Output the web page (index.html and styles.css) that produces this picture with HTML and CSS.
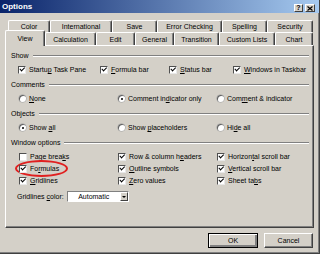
FILE: index.html
```html
<!DOCTYPE html>
<html lang="en">
<head>
    <meta charset="UTF-8">
    <meta name="viewport" content="width=device-width, initial-scale=1.0">
    <title>Options</title>
    <link rel="stylesheet" href="styles.css">
</head>
<body>
    <div class="dialog">
        <div class="titlebar">
            <span class="title">Options</span>
            <span class="tbtn">?</span>
            <span class="tbtn close">
                <svg width="6" height="5" viewBox="0 0 6 5"><path d="M0.5 0.5 L5.5 4.5 M5.5 0.5 L0.5 4.5" stroke="#000" stroke-width="1.2"/></svg>
            </span>
        </div>

        <div class="tabs">
            <div class="tabrow back">
                <div class="tab">Color</div>
                <div class="tab">International</div>
                <div class="tab">Save</div>
                <div class="tab">Error Checking</div>
                <div class="tab">Spelling</div>
                <div class="tab">Security</div>
            </div>
            <div class="tabrow front">
                <div class="tab active">View</div>
                <div class="tab">Calculation</div>
                <div class="tab">Edit</div>
                <div class="tab">General</div>
                <div class="tab">Transition</div>
                <div class="tab">Custom Lists</div>
                <div class="tab">Chart</div>
            </div>
        </div>

        <div class="panel">
            <div class="group">
                <div class="heading">Show</div>
                <div class="row show-row">
                    <div class="item"><span class="check on"></span><span>Startu<u>p</u> Task Pane</span></div>
                    <div class="item"><span class="check on"></span><span><u>F</u>ormula bar</span></div>
                    <div class="item"><span class="check on"></span><span><u>S</u>tatus bar</span></div>
                    <div class="item"><span class="check on"></span><span><u>W</u>indows in Taskbar</span></div>
                </div>
            </div>

            <div class="group">
                <div class="heading">Comments</div>
                <div class="row">
                    <div class="item"><span class="radio"></span><span><u>N</u>one</span></div>
                    <div class="item"><span class="radio on"></span><span>Comment in<u>d</u>icator only</span></div>
                    <div class="item"><span class="radio"></span><span>Com<u>m</u>ent &amp; indicator</span></div>
                </div>
            </div>

            <div class="group">
                <div class="heading">Objects</div>
                <div class="row">
                    <div class="item"><span class="radio on"></span><span>Show <u>a</u>ll</span></div>
                    <div class="item"><span class="radio"></span><span>Show <u>p</u>laceholders</span></div>
                    <div class="item"><span class="radio"></span><span>Hi<u>d</u>e all</span></div>
                </div>
            </div>

            <div class="group">
                <div class="heading">Window options</div>
                <div class="options">
                    <div class="row">
                        <div class="item"><span class="check"></span><span>Page brea<u>k</u>s</span></div>
                        <div class="item"><span class="check on"></span><span>Row &amp; column h<u>e</u>aders</span></div>
                        <div class="item"><span class="check on"></span><span>Horizon<u>t</u>al scroll bar</span></div>
                    </div>
                    <div class="row">
                        <div class="item marked"><span class="check on"></span><span>Fo<u>r</u>mulas</span></div>
                        <div class="item"><span class="check on"></span><span><u>O</u>utline symbols</span></div>
                        <div class="item"><span class="check on"></span><span><u>V</u>ertical scroll bar</span></div>
                    </div>
                    <div class="row">
                        <div class="item"><span class="check on"></span><span><u>G</u>ridlines</span></div>
                        <div class="item"><span class="check on"></span><span><u>Z</u>ero values</span></div>
                        <div class="item"><span class="check on"></span><span>Sheet ta<u>b</u>s</span></div>
                    </div>
                </div>
                <div class="color-row">
                    <span>Gridlines <u>c</u>olor:</span>
                    <div class="select">
                        <span class="value">Automatic</span>
                        <span class="drop"></span>
                    </div>
                </div>
            </div>
        </div>

        <div class="actions">
            <button class="btn default">OK</button>
            <button class="btn">Cancel</button>
        </div>
    </div>
</body>
</html>
```

FILE: styles.css
```css
body {
    margin: 0;
    font-family: "Liberation Sans", Arial, sans-serif;
    font-size: 7px;
    color: #000;
    background-color: #d4d0c8;
}
.dialog {
    width: 320px;
    height: 254px;
    box-sizing: border-box;
    background-color: #d4d0c8;
    border-right: 1px solid #404040;
    border-bottom: 1px solid #404040;
    box-shadow: inset -1px -1px #808080;
    display: flex;
    flex-direction: column;
}
.titlebar {
    height: 13px;
    background: linear-gradient(90deg, #0a246a, #a6caf0);
    display: flex;
    align-items: flex-end;
    padding: 0 4px 1px 2px;
    box-sizing: border-box;
    gap: 2px;
}
.title {
    flex: 1;
    align-self: center;
    color: #fff;
    font-weight: bold;
    font-size: 8px;
}
.tbtn {
    width: 9px;
    height: 8px;
    box-sizing: border-box;
    background-color: #d4d0c8;
    border: 1px solid;
    border-color: #fff #404040 #404040 #fff;
    font-weight: bold;
    font-size: 7px;
    line-height: 6px;
    text-align: center;
    display: flex;
    align-items: center;
    justify-content: center;
}
.tbtn.close {
    width: 10px;
}
.tabs {
    margin-top: 7px;
    padding-left: 5px;
}
.tabrow {
    display: grid;
    height: 12px;
}
.tabrow.back {
    margin-left: 3px;
    grid-template-columns: 42px 62px 45px 65px 45px 46px;
}
.tabrow.front {
    height: 13px;
    grid-template-columns: 40px 51px 39px 39px 45px 56px 38px;
}
.tab {
    background-color: #d4d0c8;
    border: 1px solid;
    border-color: #fff #404040 #d4d0c8 #fff;
    border-bottom: none;
    border-radius: 2px 2px 0 0;
    box-shadow: inset -1px 0 #808080;
    display: flex;
    align-items: center;
    justify-content: center;
    white-space: nowrap;
}
.tab.active {
    margin-top: -2px;
    margin-bottom: -1px;
    position: relative;
    z-index: 1;
}
.panel {
    margin-left: 5px;
    width: 309px;
    height: 183px;
    box-sizing: border-box;
    border: 1px solid;
    border-color: #fff #404040 #404040 #fff;
    box-shadow: inset -1px -1px #808080;
    padding: 5px 4px 0 5px;
}
.group {
    display: flex;
    flex-direction: column;
    gap: 5px;
    margin-bottom: 6px;
}
.heading {
    display: flex;
    align-items: center;
    height: 9px;
    white-space: nowrap;
}
.heading::after {
    content: "";
    flex: 1;
    margin-left: 4px;
    border-top: 1px solid #808080;
    border-bottom: 1px solid #fff;
}
.row {
    display: grid;
    grid-template-columns: 99px 99px auto;
    padding-left: 8px;
    height: 9px;
}
.row.show-row {
    grid-template-columns: 82px 69px 64px auto;
    padding-left: 7px;
}
.options {
    display: flex;
    flex-direction: column;
    gap: 3px;
}
.item {
    display: flex;
    align-items: center;
    gap: 3px;
    white-space: nowrap;
    position: relative;
}
.check {
    width: 8px;
    height: 8px;
    box-sizing: border-box;
    background-color: #fff;
    border: 1px solid;
    border-color: #505050 #e8e8e8 #e8e8e8 #505050;
    flex: none;
    position: relative;
}
.check.on::after {
    content: "";
    position: absolute;
    left: 1.5px;
    top: -0.5px;
    width: 1.5px;
    height: 3.5px;
    border-right: 1.3px solid #000;
    border-bottom: 1.3px solid #000;
    transform: rotate(45deg);
}
.radio {
    width: 7px;
    height: 7px;
    border-radius: 50%;
    background-color: #fff;
    box-shadow: inset 1px 1px #606060, 0 0 0 0.5px #a0a0a0;
    flex: none;
    position: relative;
}
.radio.on::after {
    content: "";
    position: absolute;
    left: 2.5px;
    top: 2.5px;
    width: 2px;
    height: 2px;
    border-radius: 50%;
    background-color: #000;
}
.marked::before {
    content: "";
    position: absolute;
    left: -4px;
    top: -4px;
    width: 53px;
    height: 17px;
    box-sizing: border-box;
    border: 2px solid #e02020;
    border-radius: 50%;
}
.color-row {
    display: flex;
    align-items: center;
    gap: 3px;
    padding-left: 6px;
    margin-top: 1px;
    height: 11px;
}
.select {
    width: 62px;
    height: 11px;
    box-sizing: border-box;
    background-color: #fff;
    border: 1px solid;
    border-color: #808080 #fff #fff #808080;
    display: flex;
}
.select .value {
    flex: 1;
    text-align: center;
    line-height: 9px;
}
.select .drop {
    width: 8px;
    box-sizing: border-box;
    background-color: #d4d0c8;
    border: 1px solid;
    border-color: #fff #404040 #404040 #fff;
    display: flex;
    align-items: center;
    justify-content: center;
}
.select .drop::after {
    content: "";
    border-left: 2px solid transparent;
    border-right: 2px solid transparent;
    border-top: 2px solid #000;
}
.actions {
    display: flex;
    justify-content: flex-end;
    gap: 6px;
    padding: 5px 6px 0 0;
}
.btn {
    width: 49px;
    height: 15px;
    padding: 0;
    font-family: inherit;
    font-size: 7px;
    color: #000;
    background-color: #d4d0c8;
    border: 1px solid;
    border-color: #fff #404040 #404040 #fff;
    box-shadow: inset -1px -1px #808080;
}
.btn.default {
    width: 50px;
    border-color: #000;
    box-shadow: inset 1px 1px #fff, inset -2px -2px #808080;
}
```
